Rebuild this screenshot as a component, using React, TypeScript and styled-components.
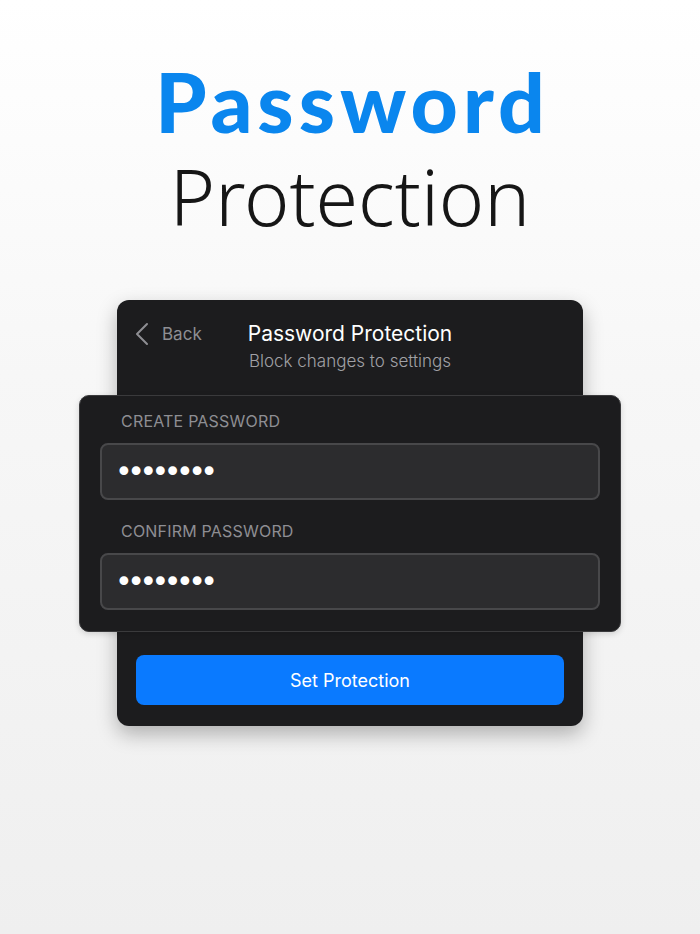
import React from 'react';
import styled, { createGlobalStyle } from 'styled-components';

const GlobalStyle = createGlobalStyle`
  html, body {
    margin: 0;
    padding: 0;
  }
  body {
    background: linear-gradient(180deg, #ffffff 0%, #f7f7f7 40%, #efefef 100%);
    min-height: 934px;
    font-family: Inter, "Liberation Sans", sans-serif;
  }
`;

const Page = styled.div`
  display: flex;
  flex-direction: column;
  align-items: center;
  height: 934px;
  padding-top: 53px;
  box-sizing: border-box;
`;

const Headline = styled.h1`
  margin: 0;
  padding-left: 5px;
  font-family: Lato, "Noto Sans", sans-serif;
  font-weight: 900;
  font-size: 82px;
  line-height: 96px;
  color: #0a86ee;
  letter-spacing: 5px;
`;

const SubHeadline = styled.h2`
  margin: 0;
  font-family: "Noto Sans", "Open Sans", sans-serif;
  font-weight: 300;
  font-size: 77px;
  line-height: 96px;
  color: #161616;
`;

const BackCard = styled.div`
  margin-top: 55px;
  width: 466px;
  background: #1c1c1e;
  border-radius: 12px;
  box-shadow: 0 8px 20px rgba(0, 0, 0, 0.28);
  display: flex;
  flex-direction: column;
`;

const Header = styled.div`
  position: relative;
  height: 95px;
  display: flex;
  flex-direction: column;
  align-items: center;
  padding-top: 20px;
  box-sizing: border-box;
`;

const BackLink = styled.div`
  position: absolute;
  left: 18px;
  top: 22px;
  display: flex;
  align-items: center;
  gap: 13px;
  color: #8e8e93;
  font-size: 17px;
`;

const Title = styled.div`
  color: #ffffff;
  font-size: 21px;
  line-height: 28px;
  font-weight: 400;
`;

const Subtitle = styled.div`
  color: #a1a1a6;
  font-size: 17px;
  line-height: 26px;
  font-weight: 300;
`;

const FormCard = styled.div`
  margin: 0 -38px;
  background: #1c1c1e;
  border: 1px solid #3a3a3c;
  border-radius: 10px;
  padding: 0 20px 21px;
  box-shadow: 0 2px 6px rgba(0, 0, 0, 0.15);
  display: flex;
  flex-direction: column;
`;

const FieldLabel = styled.div<{ $top: number }>`
  padding: ${p => p.$top}px 0 11px 21px;
  color: #8e8e93;
  font-size: 16px;
  line-height: 22px;
  letter-spacing: 0.2px;
`;

const Field = styled.div`
  height: 57px;
  box-sizing: border-box;
  background: #2c2c2e;
  border: 2px solid #48484a;
  border-radius: 8px;
  display: flex;
  align-items: center;
  padding-left: 13px;
  color: #ffffff;
  font-family: "DejaVu Sans", sans-serif;
  font-size: 30px;
  letter-spacing: -5.5px;
`;

const Footer = styled.div`
  padding: 23px 19px 21px;
`;

const PrimaryButton = styled.button`
  width: 100%;
  height: 50px;
  border: none;
  border-radius: 8px;
  background: #0a7aff;
  color: #ffffff;
  font-family: Inter, "Liberation Sans", sans-serif;
  font-size: 18px;
  cursor: pointer;
`;

const ChevronLeft = () => (
  <svg width="14" height="24" viewBox="0 0 14 24" fill="none">
    <path d="M12 2 L2 12 L12 22" stroke="#8e8e93" strokeWidth="2" strokeLinecap="round" strokeLinejoin="round" />
  </svg>
);

const App: React.FC = () => {
  return (
    <>
      <GlobalStyle />
      <Page>
        <Headline>Password</Headline>
        <SubHeadline>Protection</SubHeadline>
        <BackCard>
          <Header>
            <BackLink>
              <ChevronLeft />
              Back
            </BackLink>
            <Title>Password Protection</Title>
            <Subtitle>Block changes to settings</Subtitle>
          </Header>
          <FormCard>
            <FieldLabel $top={14}>CREATE PASSWORD</FieldLabel>
            <Field>••••••••</Field>
            <FieldLabel $top={20}>CONFIRM PASSWORD</FieldLabel>
            <Field>••••••••</Field>
          </FormCard>
          <Footer>
            <PrimaryButton type="button">Set Protection</PrimaryButton>
          </Footer>
        </BackCard>
      </Page>
    </>
  );
};

export default App;
